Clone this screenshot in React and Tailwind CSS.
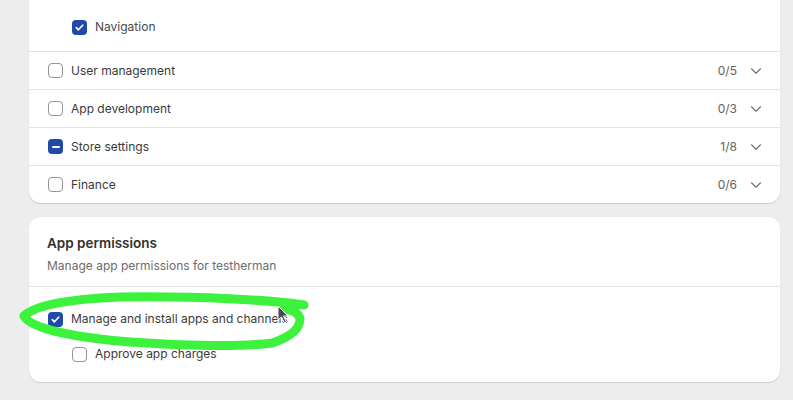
import {ChevronDown} from "lucide-react";

function Box({state}) {
    if (state === "checked") {
        return (
            <span className="flex h-[15px] w-[15px] shrink-0 items-center justify-center rounded-[4px] bg-[#1f4aa8]">
                <svg width="11" height="11" viewBox="0 0 12 12" fill="none">
                    <path d="M2.5 6.2l2.3 2.3 4.7-5" stroke="white" strokeWidth="1.8" strokeLinecap="round" strokeLinejoin="round" />
                </svg>
            </span>
        )
    }
    if (state === "mixed") {
        return (
            <span className="flex h-[15px] w-[15px] shrink-0 items-center justify-center rounded-[4px] bg-[#1f4aa8]">
                <span className="h-[2px] w-[8px] rounded bg-white" />
            </span>
        )
    }
    return <span className="h-[15px] w-[15px] shrink-0 rounded-[4px] border-[1.5px] border-[#8f959c] bg-white" />
}

function Row({label, count, state}) {
    return (
        <div className="flex h-[38px] items-center border-t border-[#e4e4e4] pl-[19px] pr-[15px]">
            <Box state={state} />
            <span className="ml-[8px] flex-1 text-[12px] text-[#3a3a3a]">{label}</span>
            <span className="text-[12px] text-[#616161]">{count}</span>
            <ChevronDown className="ml-[10px] text-[#707070]" size={18} strokeWidth={1.5} />
        </div>
    )
}

export default function App() {
    const rows = [
        {label: "User management", count: "0/5", state: "none"},
        {label: "App development", count: "0/3", state: "none"},
        {label: "Store settings", count: "1/8", state: "mixed"},
        {label: "Finance", count: "0/6", state: "none"},
    ]
    return (
        <div className="relative h-[400px] w-[793px] overflow-hidden bg-[#ededed] font-['Inter',sans-serif]">
            <div className="ml-[29px] w-[751px] rounded-b-xl bg-white shadow-[0_1px_1px_rgba(0,0,0,0.14)]">
                <div className="flex h-[51px] items-center pl-[43px] pt-[3px]">
                    <Box state="checked" />
                    <span className="ml-[8px] text-[12px] text-[#4a4a4a]">Navigation</span>
                </div>
                {rows.map(r => <Row key={r.label} {...r} />)}
            </div>

            <div className="ml-[29px] mt-[14px] w-[751px] rounded-xl bg-white shadow-[0_1px_1px_rgba(0,0,0,0.14)]">
                <div className="px-[18px] pb-[11px] pt-[16px]">
                    <div className="text-[13.5px] font-semibold leading-[20px] text-[#303030]">App permissions</div>
                    <div className="mt-[4px] text-[12px] leading-[18px] text-[#6b6b6b]">Manage app permissions for testherman</div>
                </div>
                <div className="border-t border-[#e4e4e4] pb-[20px] pt-[24px]">
                    <div className="flex h-[16px] items-center pl-[19px]">
                        <Box state="checked" />
                        <span className="ml-[8px] text-[12px] text-[#3a3a3a]">Manage and install apps and channels</span>
                    </div>
                    <div className="mt-[19px] flex h-[16px] items-center pl-[43px]">
                        <Box state="none" />
                        <span className="ml-[8px] text-[12px] text-[#3a3a3a]">Approve app charges</span>
                    </div>
                </div>
            </div>

            {/* hand-drawn highlight */}
            <svg className="pointer-events-none absolute left-0 top-0" width="793" height="400" viewBox="0 0 793 400" fill="none">
                <path d="M304 305 C270 300 200 296 120 297 C70 299 35 305 24 316 C30 328 70 337 130 342 C190 346 240 347 272 343 C290 337 300 329 300 319 C299 313 292 310 284 309"
                      stroke="#3df23d" strokeWidth="9" strokeLinecap="round" strokeLinejoin="round" />
                <path d="M278 306 L278 320 L281.5 317 L284.5 323 L286.5 322 L283.5 316 L288 316 Z" fill="#4a4a4a" stroke="white" strokeWidth="1" />
            </svg>
        </div>
    )
}
